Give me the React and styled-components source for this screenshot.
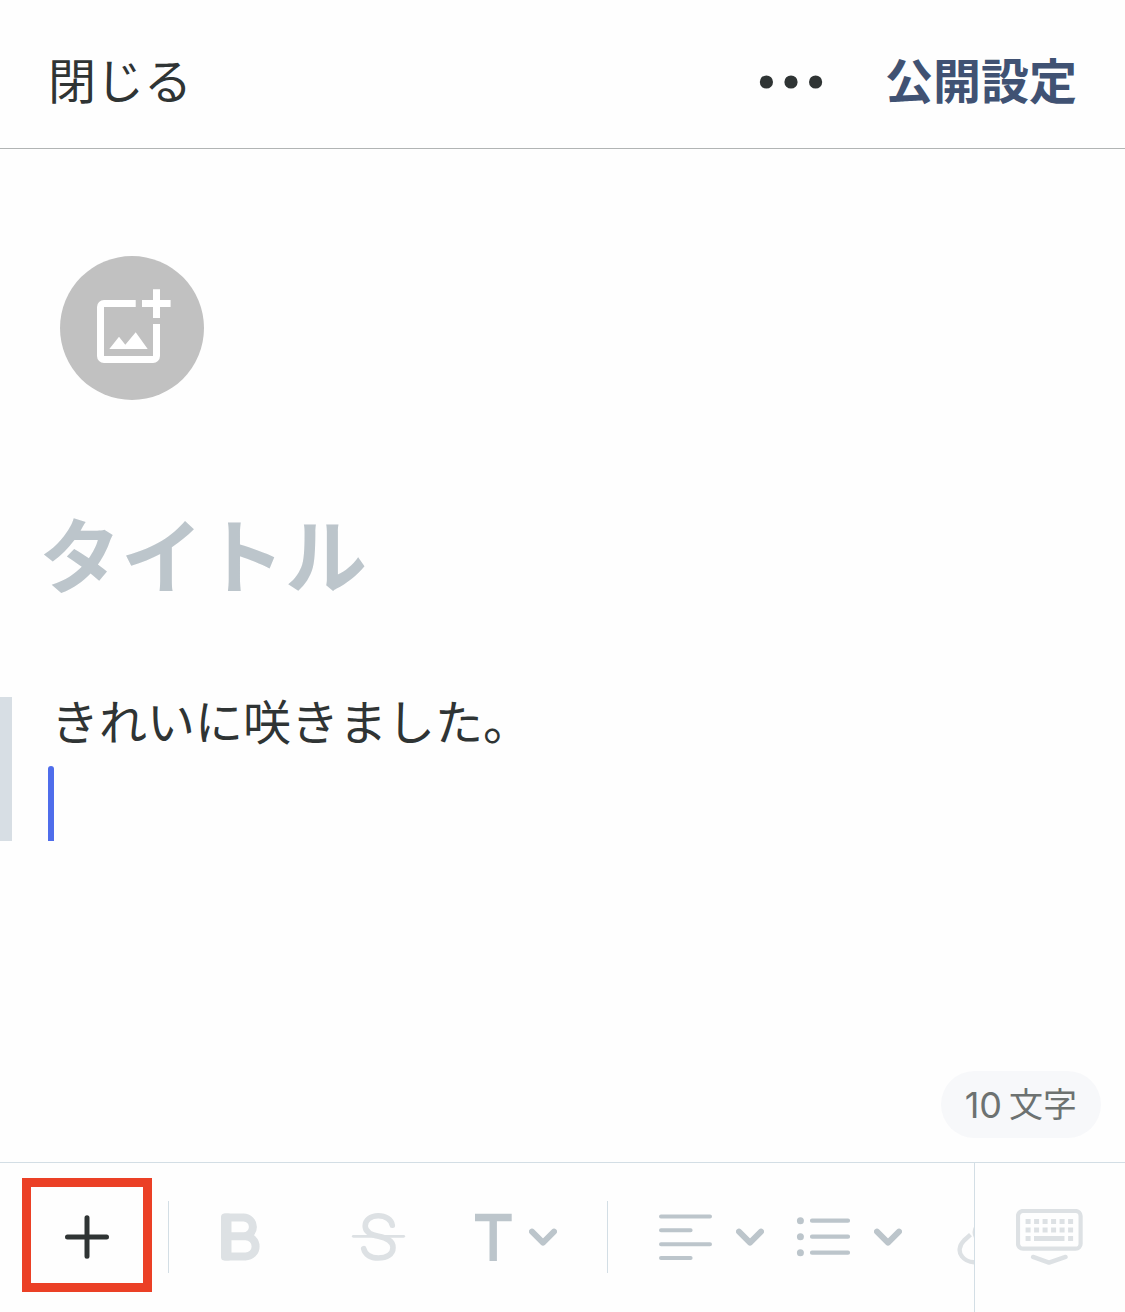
import React from 'react';
import styled, { createGlobalStyle } from "styled-components";

const icon = "#bcc5cb";
const iconOff = "#dde1e4";
const dark = "#2f3434";

const Chevron = () => (
    <Icon $w={28} viewBox="0 0 28 56" $color={icon}>
        <path d="M3 22.7 14 33.6 25 22.7" strokeWidth="6"/>
    </Icon>
);

const App = () => {
    const [title, setTitle] = React.useState('');
    const [text, setText] = React.useState('きれいに咲きました。\n');
    const count = text.replace(/\n/g, '').length;

    return (
        <Page>
            <Global/>
            <Header>
                <CloseButton type="button">閉じる</CloseButton>
                <HeaderRight>
                    <MenuButton type="button" aria-label="メニュー">
                        <Dots viewBox="0 0 64 16">
                            <circle cx="7.4" cy="8" r="6.6"/>
                            <circle cx="32" cy="8" r="6.6"/>
                            <circle cx="56.6" cy="8" r="6.6"/>
                        </Dots>
                    </MenuButton>
                    <PublishButton type="button">公開設定</PublishButton>
                </HeaderRight>
            </Header>

            <Editor>
                <CoverButton type="button" aria-label="画像を追加">
                    <Icon $w={80} $h={80} viewBox="0 0 80 80" $color="#fff">
                        <g strokeWidth="7" strokeLinecap="butt">
                            <path d="M43.7 15.5H12a3.5 3.5 0 0 0-3.5 3.5v49a3.5 3.5 0 0 0 3.5 3.5h49a3.5 3.5 0 0 0 3.5-3.5V36"/>
                            <path d="M64.5 1.3V30M50 15.5h28.6"/>
                        </g>
                        <path d="M17.3 61 27 48.7l6.3 8 10.4-12.4 12 16.7z" fill="#fff" stroke="none"/>
                    </Icon>
                </CoverButton>
                <TitleInput
                    aria-label="タイトル"
                    placeholder="タイトル"
                    value={title}
                    onChange={(e) => setTitle(e.target.value)}
                />
                <Block>
                    <BodyInput
                        aria-label="本文"
                        value={text}
                        onChange={(e) => setText(e.target.value)}
                    />
                    <Caret/>
                </Block>
            </Editor>

            <CountRow>
                <Count><Num>{count}</Num><Unit>文字</Unit></Count>
            </CountRow>

            <Toolbar>
                <Tools>
                    <AddButton type="button" aria-label="追加">
                        <Icon viewBox="0 0 56 56" $color={dark}>
                            <path d="M28 10.7v38.6M8.5 30h39" strokeWidth="5"/>
                        </Icon>
                    </AddButton>
                    <Divider/>
                    <Tool type="button" aria-label="太字" $gap={44}>
                        <Icon viewBox="0 0 56 56" $color={iconOff}>
                            <rect x="8" y="4.5" width="10.5" height="47" rx="3.5" fill={iconOff} stroke="none"/>
                            <path d="M13 8.5h17.5a9.4 9.4 0 0 1 0 18.8H15M15 27.3h17.5a10.1 10.1 0 0 1 0 20.2H13" strokeWidth="8"/>
                        </Icon>
                    </Tool>
                    <Tool type="button" aria-label="取り消し線" $gap={82}>
                        <Icon viewBox="0 0 56 56" $color={iconOff}>
                            <path d="M2.3 27.3h50.4" strokeWidth="2.8"/>
                            <path d="M41.3 16.3C40.5 10.5 34.5 6.7 27.3 6.7c-7.8 0-13.1 4.3-13.1 10.3 0 6.5 5.8 8.8 13.3 10.3 8 1.7 14.5 4.2 14.5 11.4C42 45 36 49 27.3 49c-7.8 0-13.3-3.5-14.6-9.3" strokeWidth="5.6"/>
                        </Icon>
                    </Tool>
                    <Tool type="button" aria-label="文字サイズ" $gap={66} $inner={16}>
                        <Icon $w={40} viewBox="0 0 40 56" $color={icon}>
                            <path d="M2 8.5h36.7M20.2 8.5V52" strokeWidth="7.4" strokeLinecap="butt"/>
                        </Icon>
                        <Chevron/>
                    </Tool>
                    <Divider $gap={50}/>
                    <Tool type="button" aria-label="配置" $gap={50} $inner={22}>
                        <Icon viewBox="0 0 56 56" $color={icon}>
                            <path d="M3 7.4h49M3 21.3h29.6M3 35.2h49M3 49.1h29.6" strokeWidth="4"/>
                        </Icon>
                        <Chevron/>
                    </Tool>
                    <Tool type="button" aria-label="リスト" $gap={32} $inner={22}>
                        <Icon viewBox="0 0 56 56" $color={icon}>
                            <path d="M16 11.7h36M16 27.7h36M16 43.7h36" strokeWidth="4.2"/>
                            <g fill={icon} stroke="none">
                                <circle cx="4.4" cy="11.7" r="3.5"/>
                                <circle cx="4.4" cy="27.7" r="3.5"/>
                                <circle cx="4.4" cy="43.7" r="3.5"/>
                            </g>
                        </Icon>
                        <Chevron/>
                    </Tool>
                    <Tool type="button" aria-label="リンク" $gap={55}>
                        <Icon viewBox="0 0 56 56" $color={iconOff}>
                            <path d="M13.5 25.6 7 31.5C1.5 37 1.6 43.5 5 47.500 8.500 52 13 53.600 20 53.200" strokeWidth="4.400" strokeLinecap="butt"/>
                            <path d="M20 17.500c-3 3-3 8 0 12" strokeWidth="4.400"/>
                        </Icon>
                    </Tool>
                </Tools>
                <KeyboardButton type="button" aria-label="キーボードを閉じる">
                    <Icon $w={68} viewBox="0 0 68 56" $color={iconOff}>
                        <rect x="2" y="2" width="62.6" height="37.7" rx="5" strokeWidth="4.2"/>
                        <g strokeWidth="5" strokeLinecap="butt">
                            <path d="M9.6 12.6h48" strokeDasharray="5 3.5"/>
                            <path d="M9.6 21h48" strokeDasharray="5 3.5"/>
                            <path d="M9.6 29.4h5M18 29.4h30.5M52.1 29.4h5"/>
                        </g>
                        <path d="M17 47.9 33 53.6 49.6 47.9" strokeWidth="4.4"/>
                    </Icon>
                </KeyboardButton>
            </Toolbar>
        </Page>
    );
};

export default App;

const Global = createGlobalStyle`
  * {
    box-sizing: border-box;
  }
  body {
    margin: 0;
    background: #fefefe;
  }
  body, button, input, textarea {
    font-family: "Noto Sans CJK JP", sans-serif;
  }
`

const Page = styled.div`
  min-height: 100vh;
  display: flex;
  flex-direction: column;
  color: ${dark};
`

const Button = styled.button`
  display: flex;
  align-items: center;
  justify-content: center;
  flex-shrink: 0;
  padding: 0;
  border: none;
  background: none;
  color: inherit;
  cursor: pointer;
`

const Icon = styled.svg`
  display: block;
  flex-shrink: 0;
  width: ${({ $w }) => $w || 56}px;
  height: ${({ $h }) => $h || 56}px;
  fill: none;
  stroke: ${({ $color }) => $color};
  stroke-linecap: round;
  stroke-linejoin: round;
`

const Header = styled.header`
  display: flex;
  align-items: center;
  justify-content: space-between;
  padding: 42px 48px 34px;
  border-bottom: 1px solid #b1b4b4;
`

const HeaderRight = styled.div`
  display: flex;
  align-items: center;
  gap: 62px;
`

const CloseButton = styled(Button)`
  font-size: 48px;
  line-height: 72px;
`

const MenuButton = styled(Button)`
  padding-top: 8px;
`

const PublishButton = styled(CloseButton)`
  font-weight: 700;
  color: #405273;
`

const Dots = styled.svg`
  display: block;
  width: 64px;
  height: 16px;
  fill: ${dark};
`

const Editor = styled.main`
  flex: 1;
  padding-top: 107px;
`

const CoverButton = styled(Button)`
  width: 144px;
  height: 144px;
  margin-left: 60px;
  border-radius: 50%;
  background: #c1c1c1;
`

const TitleInput = styled.input`
  display: block;
  width: 100%;
  height: 126px;
  margin: 88px 0 83px;
  padding: 0 39px;
  border: none;
  outline: none;
  background: none;
  color: ${dark};
  font-size: 82px;
  font-weight: 700;
  &::placeholder {
    color: ${icon};
    opacity: 1;
  }
`

const Block = styled.div`
  position: relative;
  border-left: 12px solid #d7dee4;
`

const BodyInput = styled.textarea`
  display: block;
  width: 100%;
  height: 144px;
  padding: 0 39px;
  border: none;
  outline: none;
  resize: none;
  overflow: hidden;
  background: none;
  color: ${dark};
  font-size: 48px;
  line-height: 44px;
`

const Caret = styled.span`
  position: absolute;
  left: 36px;
  bottom: 0;
  width: 6px;
  height: 75px;
  border-radius: 3px 3px 0 0;
  background: #4f6deb;
`

const CountRow = styled.div`
  display: flex;
  justify-content: flex-end;
  padding: 24px;
`

const Count = styled.div`
  display: flex;
  align-items: center;
  gap: 7px;
  height: 67px;
  padding: 0 24px;
  border-radius: 34px;
  background: #f7f8fa;
  color: #6d7271;
`

const Num = styled.span`
  font-family: Inter, sans-serif;
  font-size: 36px;
`

const Unit = styled.span`
  padding-bottom: 4px;
  font-size: 34px;
`

const Toolbar = styled.footer`
  display: flex;
  height: 150px;
  border-top: 1px solid #d3dee5;
`

const Tools = styled.div`
  flex: 1;
  min-width: 0;
  display: flex;
  align-items: center;
  padding-bottom: 1px;
  overflow: hidden;
`

const AddButton = styled(Button)`
  align-self: flex-start;
  width: 130px;
  height: 114px;
  margin: 15px 16px 0 22px;
  border: 9px solid #eb4026;
`

const Divider = styled.span`
  flex-shrink: 0;
  width: 1px;
  height: 72px;
  margin-left: ${({ $gap }) => $gap || 0}px;
  background: #d3dee5;
`

const Tool = styled(Button)`
  gap: ${({ $inner }) => $inner || 0}px;
  margin-left: ${({ $gap }) => $gap}px;
`

const KeyboardButton = styled(Button)`
  width: 151px;
  padding-bottom: 1px;
  border-left: 1px solid #d3dee5;
`
